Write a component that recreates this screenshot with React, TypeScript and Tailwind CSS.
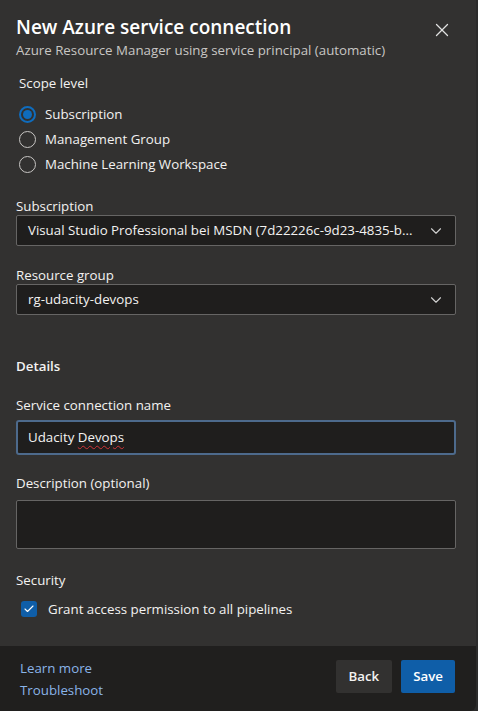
import { ChevronDown, X, Check } from 'lucide-react';

const font = { fontFamily: '"Open Sans", "Noto Sans", sans-serif' };

function Radio({ label, checked }: { label: string; checked?: boolean }) {
  return (
    <div className="flex items-center gap-[9px] h-[25px]">
      {checked ? (
        <span className="w-[17px] h-[17px] rounded-full border-2 border-[#0f6cbd] flex items-center justify-center">
          <span className="w-[9px] h-[9px] rounded-full bg-[#0f6cbd]" />
        </span>
      ) : (
        <span className="w-[17px] h-[17px] rounded-full border border-[#c8c6c4]" />
      )}
      <span className="text-[13.3px] text-[#f3f2f1]">{label}</span>
    </div>
  );
}

function Select({ value }: { value: string }) {
  return (
    <div className="flex items-center h-[31px] bg-[#1f1e1d] border border-[#666564] rounded-[2px] pl-[11px] pr-[10px]">
      <span className="flex-1 whitespace-nowrap text-[13.3px] text-[#f3f2f1]">{value}</span>
      <ChevronDown size={18} strokeWidth={1.5} className="text-[#d0d0d0] ml-2 shrink-0" />
    </div>
  );
}

export default function App() {
  return (
    <div className="min-h-screen bg-[#2b2b2b]" style={font}>
      <div className="w-[476px] h-[711px] bg-[#323130] flex flex-col rounded-br-[6px] overflow-hidden">
        <div className="flex-1 pl-4 pr-[20px]">
          <div className="flex items-start justify-between pt-[13px]">
            <div>
              <h1 className="text-[19px] leading-[28px] font-semibold text-white">New Azure service connection</h1>
              <p className="text-[13.3px] leading-[18px] text-[#c8c6c4]">Azure Resource Manager using service principal (automatic)</p>
            </div>
            <X size={22} strokeWidth={1.4} className="text-[#e1e1e1] mt-[6px] mr-[3px]" />
          </div>

          <div className="mt-[15px] px-[3px]">
            <div className="text-[13.3px] leading-[18px] text-[#f3f2f1] mb-[10px]">Scope level</div>
            <Radio label="Subscription" checked />
            <Radio label="Management Group" />
            <Radio label="Machine Learning Workspace" />
          </div>

          <div className="mt-[20px]">
            <div className="text-[13.3px] leading-[18px] text-[#f3f2f1]">Subscription</div>
            <Select value="Visual Studio Professional bei MSDN (7d22226c-9d23-4835-b..." />
          </div>

          <div className="mt-[20px]">
            <div className="text-[13.3px] leading-[18px] text-[#f3f2f1]">Resource group</div>
            <Select value="rg-udacity-devops" />
          </div>

          <div className="mt-[41px] text-[13.3px] leading-[20px] font-semibold text-[#f3f2f1]">Details</div>

          <div className="mt-[20px]">
            <div className="text-[13.3px] leading-[18px] text-[#f3f2f1] mb-[6px]">Service connection name</div>
            <div className="flex items-center h-[35px] bg-[#1f1e1d] border-2 border-[#4d6a8c] rounded-[3px] pl-[10px]">
              <span className="text-[13.3px] text-[#f3f2f1]">
                Udacity <span className="underline decoration-wavy decoration-[#d13438] decoration-1 underline-offset-[3px]">Devops</span>
              </span>
            </div>
          </div>

          <div className="mt-[19px]">
            <div className="text-[13.3px] leading-[18px] text-[#f3f2f1] mb-[8px]">Description (optional)</div>
            <div className="h-[49px] bg-[#1f1e1d] border border-[#666564] rounded-[2px]" />
          </div>

          <div className="mt-[22px]">
            <div className="text-[13.3px] leading-[18px] text-[#f3f2f1]">Security</div>
            <div className="flex items-center gap-[11px] mt-[12px] pl-[5px]">
              <span className="w-[16px] h-[16px] rounded-[3px] bg-[#0f5ea8] flex items-center justify-center">
                <Check size={12} strokeWidth={2.2} className="text-white" />
              </span>
              <span className="text-[13.3px] leading-[16px] text-[#f3f2f1]">Grant access permission to all pipelines</span>
            </div>
          </div>
        </div>

        <div className="h-[65px] bg-[#201f1e] flex items-center justify-between pl-[20px] pr-[21px]">
          <div className="flex flex-col text-[13.3px] leading-[22px] text-[#8ab4e8]">
            <span>Learn more</span>
            <span>Troubleshoot</span>
          </div>
          <div className="flex gap-[9px] mb-[4px]">
            <button className="h-[33px] px-[13px] bg-[#323130] rounded-[2px] text-[13.3px] font-semibold text-[#f3f2f1]">Back</button>
            <button className="h-[33px] px-[12px] bg-[#0f5ea8] rounded-[2px] text-[13.3px] font-semibold text-white">Save</button>
          </div>
        </div>
      </div>
    </div>
  );
}
